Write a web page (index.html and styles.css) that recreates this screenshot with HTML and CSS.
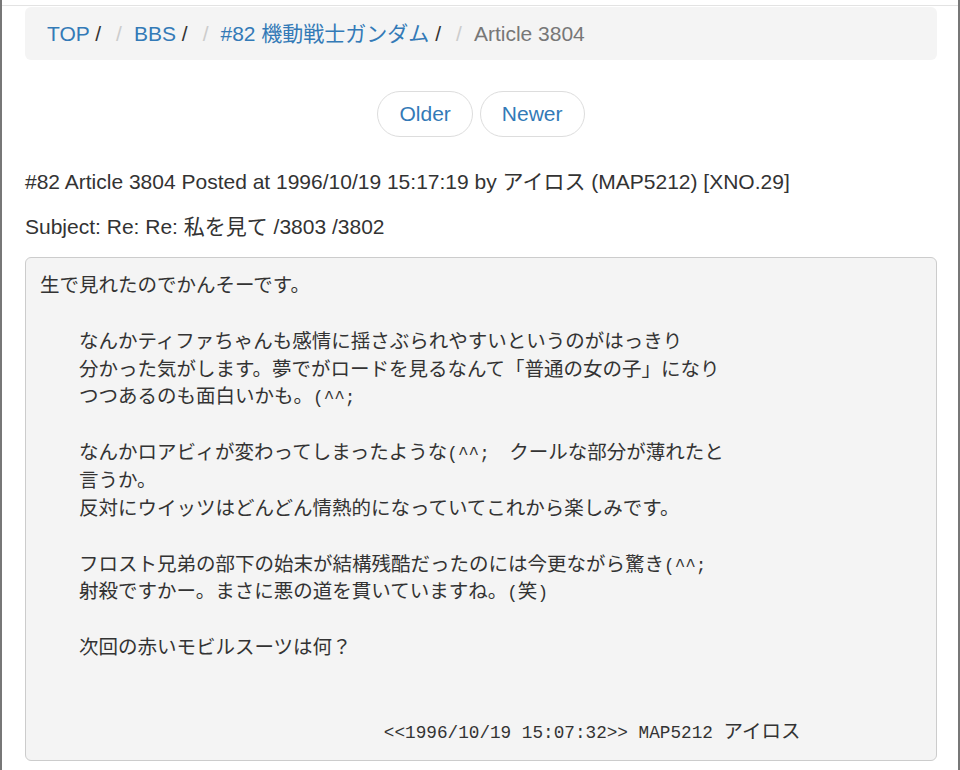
FILE: index.html
```html
<!DOCTYPE html>
<html>
<head>
	<meta charset="utf-8">
	<title>Article 3804 | #82 機動戦士ガンダム</title>
	<link rel="stylesheet" href="styles.css">
</head>
<body>
	<div class="frame">
		<div class="container">
			<ol class="breadcrumb">
				<li><a href="#">TOP</a> /</li>
				<li><a href="#">BBS</a> /</li>
				<li><a href="#">#82 機動戦士ガンダム</a> /</li>
				<li class="active">Article 3804</li>
			</ol>

			<ul class="pager">
				<li><a href="#">Older</a></li>
				<li><a href="#">Newer</a></li>
			</ul>

			<p>#82 Article 3804 Posted at 1996/10/19 15:17:19 by アイロス (MAP5212) [XNO.29]</p>
			<p>Subject: Re: Re: 私を見て /3803 /3802</p>

<pre class="article">生で見れたのでかんそーです。

　　なんかティファちゃんも感情に揺さぶられやすいというのがはっきり
　　分かった気がします。夢でがロードを見るなんて「普通の女の子」になり
　　つつあるのも面白いかも。<span class="ascii">(^^;</span>

　　なんかロアビィが変わってしまったような<span class="ascii">(^^;</span>　クールな部分が薄れたと
　　言うか。
　　反対にウイッツはどんどん情熱的になっていてこれから楽しみです。

　　フロスト兄弟の部下の始末が結構残酷だったのには今更ながら驚き<span class="ascii">(^^;</span>
　　射殺ですかー。まさに悪の道を貫いていますね。<span class="ascii">(</span>笑<span class="ascii">)</span>

　　次回の赤いモビルスーツは何？


　　　　　　　　　　　　　　　　<span class="ascii">   &lt;&lt;1996/10/19 15:07:32&gt;&gt; MAP5212 </span>アイロス</pre>
		</div>
	</div>
</body>
</html>
```

FILE: styles.css
```css
* {
	box-sizing: border-box;
}

html {
	font-size: 21px;
}

body {
	margin: 0;
	font-family: "Liberation Sans", "Noto Sans CJK JP", sans-serif;
	line-height: 30px;
	color: #333;
	background: #fff;
}

a {
	color: #337ab7;
	text-decoration: none;
}

p {
	margin: 0 0 15px;
}

.frame {
	min-height: 100vh;
	border-left: 2px solid #777;
	border-right: 2px solid #777;
	padding-top: 5px;
}

.container {
	border-top: 1px solid #e3e3e3;
	padding: 1px 21px 0 23px;
}

.breadcrumb {
	display: flex;
	list-style: none;
	margin: 0 0 31px;
	padding: 11.5px 22px;
	background: #f4f4f4;
	border-radius: 6px;
}

.breadcrumb li + li:before {
	content: "/";
	padding: 0 12px 0 15px;
	color: #ccc;
}

.breadcrumb li a {
	color: #337ab7;
}

.breadcrumb .active {
	color: #777;
}

.pager {
	display: flex;
	justify-content: center;
	gap: 7px;
	list-style: none;
	margin: 0 0 30px;
	padding: 0;
}

.pager a {
	display: block;
	padding: 7px 21px;
	background: #fff;
	border: 1px solid #ddd;
	border-radius: 23px;
}

.article {
	margin: 0;
	padding: 16px 14px 12px;
	font-family: "Liberation Mono", "Noto Sans CJK JP", monospace;
	font-size: 19.5px;
	line-height: 27.86px;
	color: #333;
	background: #f4f4f4;
	border: 1px solid #ccc;
	border-radius: 6px;
	white-space: pre;
}

.article .ascii {
	font-size: 17.7px;
}
```
